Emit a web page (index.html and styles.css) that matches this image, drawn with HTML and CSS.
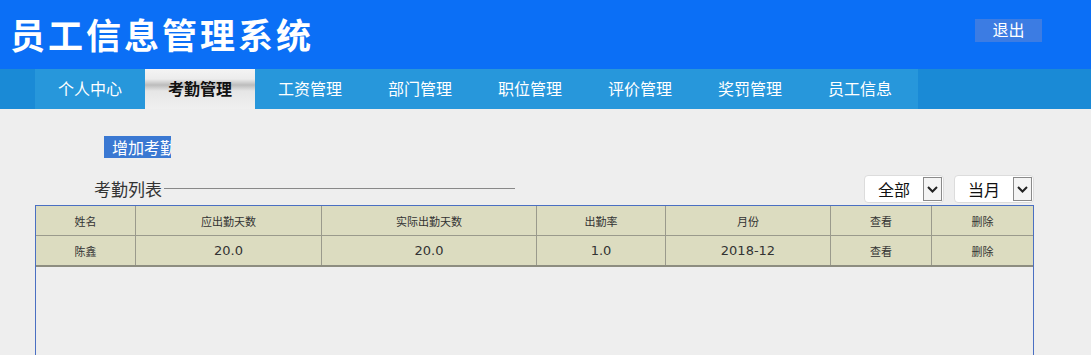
FILE: index.html
```html
<!DOCTYPE html>
<html lang="zh-CN">
<head>
    <meta charset="UTF-8">
    <title>员工信息管理系统</title>
    <link rel="stylesheet" href="styles.css">
</head>
<body>
    <div class="header">
        <h1 class="logo">员工信息管理系统</h1>
        <a class="logout" href="#">退出</a>
    </div>
    <div class="nav">
        <ul class="menu">
            <li>个人中心</li>
            <li class="active">考勤管理</li>
            <li>工资管理</li>
            <li>部门管理</li>
            <li>职位管理</li>
            <li>评价管理</li>
            <li>奖罚管理</li>
            <li>员工信息</li>
        </ul>
    </div>
    <div class="toolbar">
        <button class="add-btn">增加考勤</button>
    </div>
    <div class="list-head">
        <div class="list-title">
            <span>考勤列表</span>
            <span class="title-line"></span>
        </div>
        <div class="filters">
            <div class="select">
                <span class="select-text">全部</span>
                <span class="select-arrow"><svg width="11" height="7" viewBox="0 0 11 7"><path d="M1 1 L5.5 5.5 L10 1" fill="none" stroke="#222" stroke-width="2"/></svg></span>
            </div>
            <div class="select">
                <span class="select-text">当月</span>
                <span class="select-arrow"><svg width="11" height="7" viewBox="0 0 11 7"><path d="M1 1 L5.5 5.5 L10 1" fill="none" stroke="#222" stroke-width="2"/></svg></span>
            </div>
        </div>
    </div>
    <div class="grid">
        <table>
            <tr>
                <th class="c1">姓名</th>
                <th class="c2">应出勤天数</th>
                <th class="c3">实际出勤天数</th>
                <th class="c4">出勤率</th>
                <th class="c5">月份</th>
                <th class="c6">查看</th>
                <th>删除</th>
            </tr>
            <tr>
                <td class="small">陈鑫</td>
                <td>20.0</td>
                <td>20.0</td>
                <td>1.0</td>
                <td>2018-12</td>
                <td class="small">查看</td>
                <td class="small">删除</td>
            </tr>
        </table>
    </div>
</body>
</html>
```

FILE: styles.css
```css
body {
    margin: 0;
    background-color: #eeeeee;
    font-family: "Noto Sans CJK SC", "DejaVu Sans", sans-serif;
    overflow: hidden;
}
.header {
    display: flex;
    align-items: center;
    justify-content: space-between;
    height: 69px;
    background-color: #0b6ff6;
}
.logo {
    margin: 0 0 2px 10px;
    font-size: 35px;
    font-weight: bold;
    letter-spacing: 3px;
    color: #fff;
    line-height: 1;
}
.logout {
    margin: 0 49px 8px 0;
    width: 67px;
    height: 23px;
    line-height: 21px;
    text-align: center;
    font-size: 16px;
    color: #fff;
    text-decoration: none;
    background-color: #3c7ce3;
}
.nav {
    height: 40px;
    background-color: #1a8ad6;
}
.menu {
    display: flex;
    margin: 0 0 0 35px;
    padding: 0;
    width: 883px;
    list-style: none;
    background-color: #2797db;
}
.menu li {
    width: 110px;
    height: 40px;
    line-height: 38px;
    text-align: center;
    font-size: 16px;
    color: #fff;
}
.menu li.active {
    color: #111;
    font-weight: bold;
    background: linear-gradient(to bottom, #f4f4f4 0%, #ececec 25%, #bcbcbc 40%, #e6e6e6 55%, #f0f0f0 100%);
}
.toolbar {
    padding: 27px 0 0 104px;
    height: 22px;
}
.add-btn {
    display: block;
    width: 67px;
    height: 22px;
    padding: 0 0 0 8px;
    border: none;
    overflow: hidden;
    white-space: nowrap;
    text-align: left;
    font-family: inherit;
    font-size: 16px;
    line-height: 22px;
    color: #fff;
    background-color: #3a78d2;
}
.list-head {
    display: flex;
    align-items: center;
    justify-content: space-between;
    margin: 17px 57px 0 35px;
    height: 28px;
}
.list-title {
    display: flex;
    align-items: center;
    padding: 0 0 2px 59px;
    font-size: 17px;
    color: #333;
}
.title-line {
    display: block;
    width: 351px;
    height: 1px;
    margin: 1px 0 0 2px;
    background-color: #888;
}
.filters {
    display: flex;
    gap: 10px;
}
.select {
    display: flex;
    align-items: center;
    justify-content: space-between;
    box-sizing: border-box;
    width: 80px;
    height: 28px;
    padding: 0 1px 0 13px;
    background-color: #fff;
    border: 1px solid #dcdcdc;
    border-radius: 4px;
}
.select-text {
    font-size: 16px;
    color: #111;
}
.select-arrow {
    display: flex;
    align-items: center;
    justify-content: center;
    box-sizing: border-box;
    width: 19px;
    height: 24px;
    border: 1px solid #8a8a8a;
    background-color: #f4f4f4;
}
.grid {
    margin: 2px 57px 0 35px;
    height: 200px;
    border: 1px solid #4a6fc2;
    border-bottom: none;
}
table {
    width: 100%;
    table-layout: fixed;
    border-collapse: collapse;
    background-color: #dcdcc0;
}
th,
td {
    height: 29px;
    padding: 0;
    border: 1px solid #9a9a8c;
    text-align: center;
    font-size: 13px;
    font-weight: normal;
    color: #333;
    font-family: "DejaVu Sans", "Noto Sans CJK SC", sans-serif;
}
th,
td.small {
    font-size: 11px;
    font-family: "Noto Sans CJK SC", sans-serif;
}
tr:first-child th {
    border-top: none;
}
tr:last-child td {
    border-bottom: 2px solid #8d8d80;
}
th:first-child,
td:first-child {
    border-left: none;
}
th:last-child,
td:last-child {
    border-right: none;
}
.c1 { width: 99px; }
.c2 { width: 185px; }
.c3 { width: 214px; }
.c4 { width: 128px; }
.c5 { width: 164px; }
.c6 { width: 100px; }
```
